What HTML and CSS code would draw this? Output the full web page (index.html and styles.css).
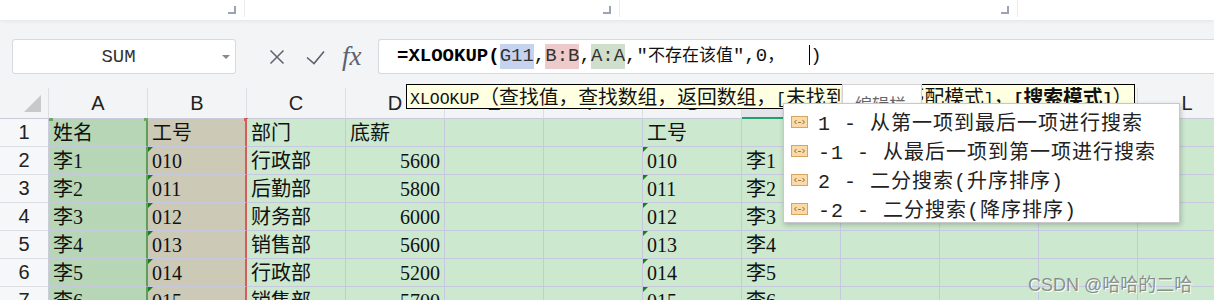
FILE: index.html
```html
<!DOCTYPE html>
<html lang="zh-CN">
<head>
    <meta charset="UTF-8">
    <title>XLOOKUP</title>
    <link rel="stylesheet" href="styles.css">
</head>
<body>

<svg class="defs" width="0" height="0">
    <symbol id="opt" viewBox="0 0 17 12">
        <rect x="0.5" y="0.5" width="16" height="11" fill="#fbdaa8" stroke="#d8a560"/>
        <path d="M5.5 4L3.5 6l2 2M11.5 4l2 2-2 2" stroke="#8c6a3c" fill="none"/>
        <path d="M7 6.5h.9M8.1 6.5h.9M9.2 6.5h.9" stroke="#8c6a3c"/>
    </symbol>
</svg>

<div class="ribbon">
    <div class="group g1"><span class="launcher"></span></div>
    <div class="group g2"><span class="launcher"></span></div>
    <div class="group g3"><span class="launcher"></span></div>
</div>

<div class="formula-bar">
    <div class="name-box"><span class="label">SUM</span><span class="caret"></span></div>
    <svg class="btn-x" width="16" height="16" viewBox="0 0 16 16">
        <path d="M1.5 1.5l13 13M14.5 1.5l-13 13" stroke="#5c6270" stroke-width="1.5" fill="none"/>
    </svg>
    <svg class="btn-ok" width="19" height="15" viewBox="0 0 19 15">
        <path d="M1 7.5l7 6L18 1.5" stroke="#5c6270" stroke-width="1.6" fill="none"/>
    </svg>
    <span class="fx">fx</span>
    <div class="formula"><span class="text"><b class="fn">=XLOOKUP(</b><span class="ref blue">G11</span>,<span class="ref red">B:B</span>,<span class="ref green">A:A</span>,"<span class="cjk">不存在该值</span>",0<span class="cjk">，</span><span class="cursor"></span>)</span></div>
</div>

<div class="sheet">
    <div class="row head">
        <div class="corner"><span class="tri"></span></div>
        <div class="ch">A</div><div class="ch">B</div><div class="ch">C</div><div class="ch">D</div>
        <div class="ch">E</div><div class="ch">F</div><div class="ch">G</div><div class="ch active">H</div>
        <div class="ch">I</div><div class="ch">J</div><div class="ch">K</div><div class="ch">L</div>
    </div>
    <div class="row">
        <div class="rh">1</div>
        <div class="c ca first">姓名</div><div class="c cb first">工号</div><div class="c">部门</div><div class="c">底薪</div>
        <div class="c"></div><div class="c"></div><div class="c">工号</div><div class="c"></div>
        <div class="c"></div><div class="c"></div><div class="c"></div><div class="c"></div>
    </div>
    <div class="row">
        <div class="rh">2</div>
        <div class="c ca">李1</div><div class="c cb t">010</div><div class="c">行政部</div><div class="c num">5600</div>
        <div class="c"></div><div class="c"></div><div class="c t">010</div><div class="c">李1</div>
        <div class="c"></div><div class="c"></div><div class="c"></div><div class="c"></div>
    </div>
    <div class="row">
        <div class="rh">3</div>
        <div class="c ca">李2</div><div class="c cb t">011</div><div class="c">后勤部</div><div class="c num">5800</div>
        <div class="c"></div><div class="c"></div><div class="c t">011</div><div class="c">李2</div>
        <div class="c"></div><div class="c"></div><div class="c"></div><div class="c"></div>
    </div>
    <div class="row">
        <div class="rh">4</div>
        <div class="c ca">李3</div><div class="c cb t">012</div><div class="c">财务部</div><div class="c num">6000</div>
        <div class="c"></div><div class="c"></div><div class="c t">012</div><div class="c">李3</div>
        <div class="c"></div><div class="c"></div><div class="c"></div><div class="c"></div>
    </div>
    <div class="row">
        <div class="rh">5</div>
        <div class="c ca">李4</div><div class="c cb t">013</div><div class="c">销售部</div><div class="c num">5600</div>
        <div class="c"></div><div class="c"></div><div class="c t">013</div><div class="c">李4</div>
        <div class="c"></div><div class="c"></div><div class="c"></div><div class="c"></div>
    </div>
    <div class="row">
        <div class="rh">6</div>
        <div class="c ca">李5</div><div class="c cb t">014</div><div class="c">行政部</div><div class="c num">5200</div>
        <div class="c"></div><div class="c"></div><div class="c t">014</div><div class="c">李5</div>
        <div class="c"></div><div class="c"></div><div class="c"></div><div class="c"></div>
    </div>
    <div class="row">
        <div class="rh">7</div>
        <div class="c ca">李6</div><div class="c cb t">015</div><div class="c">销售部</div><div class="c num">5700</div>
        <div class="c"></div><div class="c"></div><div class="c t">015</div><div class="c">李6</div>
        <div class="c"></div><div class="c"></div><div class="c"></div><div class="c"></div>
    </div>
</div>

<!-- function hint, edit bar tip and the match list sit over the grid -->
<div class="sig-tip"><span class="lat">XLOOKUP</span>（查找值，查找数组，返回数组，<span class="lat">[</span>未找到值<span class="lat">]</span>，<span class="lat">[</span>匹配模式<span class="lat">]</span>，<b><span class="lat">[</span>搜索模式<span class="lat">]</span></b>）</div>
<div class="bar-tip">编辑栏</div>

<div class="dropdown">
    <div class="item"><svg class="ico"><use href="#opt"/></svg><span>1 - 从第一项到最后一项进行搜索</span></div>
    <div class="item"><svg class="ico"><use href="#opt"/></svg><span>-1 - 从最后一项到第一项进行搜索</span></div>
    <div class="item"><svg class="ico"><use href="#opt"/></svg><span>2 - 二分搜索(升序排序)</span></div>
    <div class="item"><svg class="ico"><use href="#opt"/></svg><span>-2 - 二分搜索(降序排序)</span></div>
</div>

<div class="watermark">CSDN @哈哈的二哈</div>

</body>
</html>
```

FILE: styles.css
```css
body {
    margin: 0;
    width: 1214px;
    height: 300px;
    overflow: hidden;
    position: relative;
    background: #fff;
    font-family: "Liberation Serif", "Noto Sans CJK SC", serif;
    color: #111;
    text-spacing-trim: space-all;
}
.defs {
    position: absolute;
}

/* ribbon bottom */
.ribbon {
    height: 20px;
    display: flex;
    background: #fff;
    box-shadow: 0 1px 4px rgba(0, 0, 0, 0.07);
    position: relative;
    z-index: 1;
}
.group {
    height: 17px;
    border-right: 1px solid #ebecef;
    display: flex;
    justify-content: flex-end;
    align-items: flex-end;
    padding: 0 8px 3px 0;
    box-sizing: border-box;
}
.g1 { width: 245px; }
.g2 { width: 375px; }
.g3 { width: 398px; }
.launcher {
    width: 6px;
    height: 6px;
    border-right: 2px solid #9aa2b3;
    border-bottom: 2px solid #9aa2b3;
}

/* formula bar */
.formula-bar {
    height: 68px;
    background: #f3f4f6;
    display: flex;
    align-items: flex-start;
    padding: 19px 0 0 12px;
    box-sizing: border-box;
}
.name-box {
    width: 224px;
    height: 35px;
    box-sizing: border-box;
    border: 1px solid #d6d9df;
    border-radius: 3px;
    background: #fff;
    display: flex;
    align-items: center;
}
.name-box .label {
    flex: 1;
    text-align: center;
    font-family: "Liberation Mono", monospace;
    font-size: 19px;
    color: #333;
    padding-left: 2px;
}
.caret {
    width: 0;
    height: 0;
    border-left: 4px solid transparent;
    border-right: 4px solid transparent;
    border-top: 4px solid #888;
    margin: 0 5px 0 0;
}
.btn-x {
    margin: 10px 0 0 33px;
}
.btn-ok {
    margin: 11px 0 0 21px;
}
.fx {
    margin: 4px 0 0 17px;
    font-family: "Liberation Serif", serif;
    font-style: italic;
    font-size: 27px;
    line-height: 27px;
    color: #5c6270;
    width: 22px;
}
.formula {
    flex: 1;
    height: 35px;
    margin-left: 14px;
    box-sizing: border-box;
    border: 1px solid #d6d9df;
    border-right: none;
    border-radius: 3px 0 0 3px;
    background: #fff;
    padding-left: 18px;
    font-family: "Liberation Mono", "Noto Sans CJK SC", monospace;
    font-size: 19px;
    line-height: 33px;
    white-space: nowrap;
    color: #111;
}
.formula .fn {
    color: #000;
}
.formula .ref {
    display: inline-block;
    color: #333;
    line-height: 25px;
}
.formula .blue { background: #c6d3ee; }
.formula .red { background: #efcaca; }
.formula .green { background: #cfdfcc; }
.formula .cjk {
    font-size: 17px;
}
.cursor {
    display: inline-block;
    width: 1px;
    height: 20px;
    margin-left: 25px;
    background: #000;
    vertical-align: -4px;
}

/* grid */
.row {
    display: grid;
    grid-template-columns: 49px repeat(12, 99px);
    height: 28px;
}
.row.head {
    height: 31px;
}
.corner {
    background: #f3f4f6;
    border-right: 1px solid #dcdee4;
    border-bottom: 1px solid #c9cbdc;
    display: flex;
    justify-content: flex-end;
    align-items: flex-end;
    padding: 0 7px 6px 0;
}
.corner .tri {
    width: 0;
    height: 0;
    border-left: 17px solid transparent;
    border-bottom: 17px solid #c9c9c9;
}
.ch {
    background: #f3f4f6;
    border-right: 1px solid #dcdee4;
    border-bottom: 1px solid #c9cbdc;
    font-family: "Liberation Sans", sans-serif;
    font-size: 20px;
    color: #222;
    display: flex;
    align-items: center;
    justify-content: center;
}
.ch.active {
    background: #e3e5ea;
    border-bottom: 2px solid #21a06e;
}
.rh {
    background: #f6f7f9;
    border-right: 1px solid #c9cbdc;
    border-bottom: 1px solid #dcdee4;
    font-family: "Liberation Sans", sans-serif;
    font-size: 20px;
    color: #222;
    display: flex;
    align-items: center;
    justify-content: center;
}
.c {
    position: relative;
    background: #cce8cf;
    border-right: 1px solid #c6c8de;
    border-bottom: 1px solid #c6c8de;
    padding: 2px 4px 0;
    font-size: 20px;
    line-height: 25px;
    white-space: nowrap;
    overflow: hidden;
}
.c.num {
    text-align: right;
}
.c.ca {
    background: #b7d6b6;
    border-right: 2px solid #5e9e5a;
}
.c.cb {
    background: #ccc9b6;
    border-right: 2px solid #d65c5c;
}
.c.t::before {
    content: '';
    position: absolute;
    left: 0;
    top: 0;
    border-top: 5px solid #16801a;
    border-right: 5px solid transparent;
}
.c.first {
    overflow: visible;
}
.c.ca.first::before,
.c.ca.first::after,
.c.cb.first::after {
    content: '';
    position: absolute;
    top: -1px;
    width: 4px;
    height: 3px;
    background: #6aa866;
}
.c.ca.first::before { left: 0; }
.c.ca.first::after { right: -2px; }
.c.cb.first::after {
    right: -3px;
    background: #d65c5c;
}

/* overlays */
.sig-tip {
    position: absolute;
    left: 406px;
    top: 84px;
    width: 729px;
    height: 25px;
    box-sizing: border-box;
    border: 1px solid #000;
    background: #ffffe1;
    padding-left: 3px;
    font-family: "Noto Sans CJK SC", sans-serif;
    font-size: 19.8px;
    line-height: 22px;
    white-space: nowrap;
    overflow: hidden;
    z-index: 2;
}
.sig-tip .lat {
    font-family: "Liberation Mono", monospace;
    font-size: 16.5px;
    line-height: 0;
}
.bar-tip {
    position: absolute;
    left: 842px;
    top: 84px;
    width: 80px;
    height: 30px;
    box-sizing: border-box;
    background: #fff;
    border: 1px solid #d4d4d4;
    padding: 6px 0 0 12px;
    font-family: "Noto Sans CJK SC", sans-serif;
    font-size: 17px;
    color: #666;
    z-index: 3;
}
.dropdown {
    position: absolute;
    left: 783px;
    top: 103px;
    width: 397px;
    height: 120px;
    box-sizing: border-box;
    background: #fff;
    border: 1px solid #c8c8c8;
    box-shadow: 1px 2px 5px rgba(0, 0, 0, 0.22);
    padding-top: 3px;
    z-index: 4;
}
.item {
    height: 29px;
    display: flex;
    align-items: center;
    padding-left: 7px;
    font-family: "Liberation Mono", "Noto Sans CJK SC", monospace;
    font-size: 20px;
    letter-spacing: 1px;
    color: #222;
    white-space: pre;
}
.ico {
    width: 17px;
    height: 12px;
    margin-right: 10px;
    flex: none;
}
.watermark {
    position: absolute;
    left: 1028px;
    top: 270px;
    font-family: "Liberation Sans", "Noto Sans CJK SC", sans-serif;
    font-size: 18px;
    color: rgba(110, 110, 110, 0.75);
    text-shadow: 1px 1px 0 rgba(255, 255, 255, 0.9);
    z-index: 5;
}
```
